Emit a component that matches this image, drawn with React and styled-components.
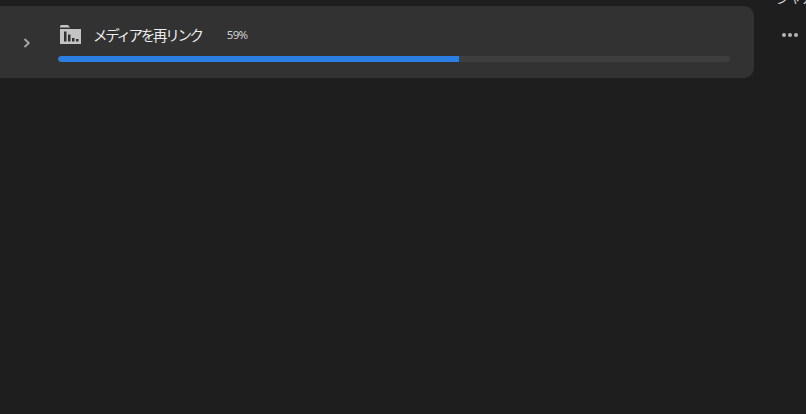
import React from 'react';
import styled, { createGlobalStyle } from 'styled-components';

const GlobalStyle = createGlobalStyle`
  html, body {
    margin: 0;
    padding: 0;
    height: 100%;
    background: #1e1e1e;
    overflow: hidden;
  }
  #root {
    height: 100%;
  }
`;

const Page = styled.div`
  display: flex;
  align-items: flex-start;
  height: 414px;
  width: 806px;
  overflow: hidden;
  background: #1e1e1e;
  font-family: "Noto Sans CJK JP", "Noto Sans", sans-serif;
`;

const Card = styled.div`
  display: flex;
  align-items: center;
  box-sizing: border-box;
  flex: none;
  width: 754px;
  height: 72px;
  margin-top: 6px;
  padding: 0 24px 0 22px;
  background: #323232;
  border-radius: 0 10px 10px 0;
`;

const Chevron = styled.svg`
  flex: none;
  width: 10px;
  height: 12px;
  margin: 2px 26px 0 0;
`;

const Body = styled.div`
  flex: 1;
  min-width: 0;
  display: flex;
  flex-direction: column;
  gap: 9px;
  padding: 3px 0 2px;
`;

const TitleRow = styled.div`
  display: flex;
  align-items: center;
  height: 24px;
  padding-left: 2px;
`;

const FolderIcon = styled.svg`
  flex: none;
  width: 21px;
  height: 20px;
  margin-right: 12px;
`;

const Title = styled.span`
  color: #ececec;
  font-size: 14.5px;
  letter-spacing: -2.3px;
  line-height: 20px;
  white-space: nowrap;
`;

const Percent = styled.span`
  margin-left: 25px;
  color: #d0d0d0;
  font-family: "Noto Sans", sans-serif;
  font-size: 11.5px;
  letter-spacing: -0.7px;
  line-height: 16px;
`;

const Track = styled.div`
  height: 6px;
  border-radius: 3px;
  background: #3e3e3e;
  overflow: hidden;
`;

const Fill = styled.div`
  height: 100%;
  background: #2b7fe3;
  border-radius: 3px 0 0 3px;
`;

const Side = styled.div`
  flex: 1;
  min-width: 0;
  display: flex;
  flex-direction: column;
  align-items: flex-start;
  padding-left: 22px;
`;

const CutLabel = styled.div`
  height: 4px;
  overflow: hidden;
  color: #d8d8d8;
  font-size: 13px;
  line-height: 13px;
  white-space: nowrap;

  span {
    display: block;
    margin-top: -9px;
  }
`;

const MoreButton = styled.div`
  display: flex;
  gap: 2px;
  margin: 29px 0 0 6px;
`;

const Dot = styled.i`
  display: block;
  width: 4px;
  height: 4px;
  border-radius: 50%;
  background: #b4b4b4;
`;

export default function App() {
  const progress = 59.6;

  return (
    <>
      <GlobalStyle />
      <Page>
        <Card>
          <Chevron viewBox="0 0 10 12">
            <path d="M2.5 2 L6.8 6 L2.5 10" fill="none" stroke="#a8a8a8" strokeWidth="1.8" />
          </Chevron>
          <Body>
            <TitleRow>
              <FolderIcon viewBox="0 0 21 20">
                <path d="M0 1.5 Q0 0 1.5 0 H8 L10 2.5 H0 Z" fill="#c4c4c4" />
                <path
                  fillRule="evenodd"
                  fill="#c4c4c4"
                  d="M0 4 H21 V19 H0 Z M4 6.5 V16.5 H6.5 V6.5 Z M8 9.5 V16.5 H10.5 V9.5 Z M12 13 V16.5 H14.5 V13 Z M16 14 V16.5 H18.5 V14 Z"
                />
              </FolderIcon>
              <Title>メディアを再リンク</Title>
              <Percent>59%</Percent>
            </TitleRow>
            <Track>
              <Fill style={{ width: `${progress}%` }} />
            </Track>
          </Body>
        </Card>
        <Side>
          <CutLabel><span>シャカ</span></CutLabel>
          <MoreButton>
            <Dot />
            <Dot />
            <Dot />
          </MoreButton>
        </Side>
      </Page>
    </>
  );
}
